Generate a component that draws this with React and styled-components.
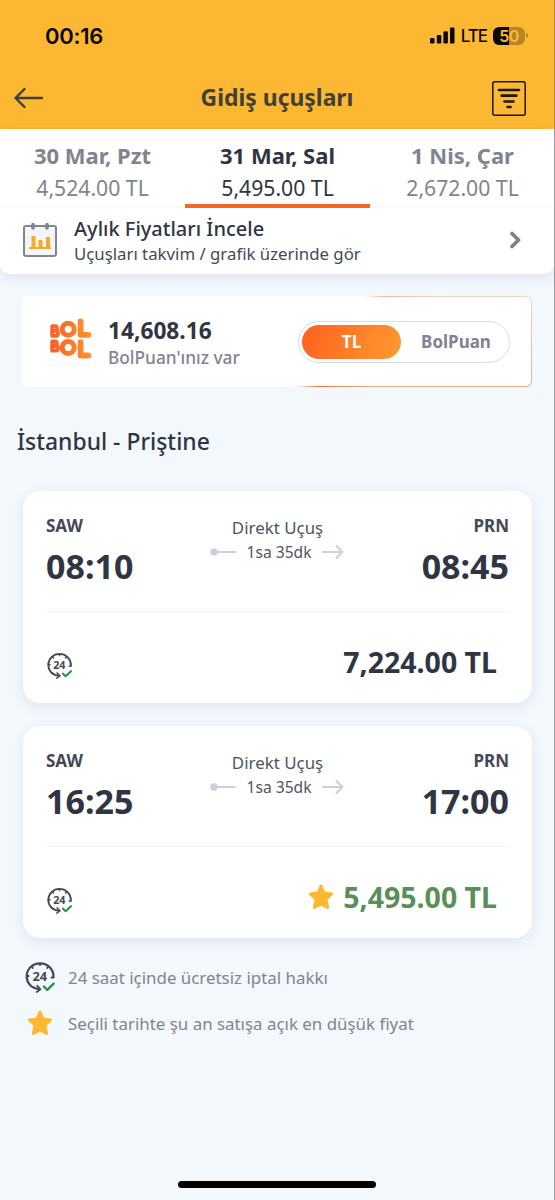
import React from "react";
import styled, { createGlobalStyle } from "styled-components";

const colors = {
  yellow: "#fdb833",
  orange: "#f26722",
  dark: "#2f3542",
  text: "#4e5461",
  gray: "#808490",
  line: "#c9d1dd",
  bg: "#f3f8fd",
  green: "#5b8f59",
};

const GlobalStyle = createGlobalStyle`
  * {
    box-sizing: border-box;
  }
  body {
    margin: 0;
    font-family: "Noto Sans", "Open Sans", sans-serif;
    color: ${colors.dark};
  }
  svg {
    display: block;
    flex-shrink: 0;
  }
`;

const Screen = styled.div`
  display: flex;
  flex-direction: column;
  width: 555px;
  height: 1200px;
  overflow: hidden;
  background: ${colors.bg};
  border-right: 1px solid;
  border-image: linear-gradient(#b98a2f 129px, #9a9da1 129px) 1;
`;

const Header = styled.header`
  height: 129px;
  flex-shrink: 0;
  background: ${colors.yellow};
`;

const StatusBar = styled.div`
  display: flex;
  align-items: center;
  justify-content: space-between;
  height: 70px;
  padding: 1px 26px 0 45px;
  color: #0b0904;
  font-family: Inter, sans-serif;
`;

const Clock = styled.span`
  font-size: 22px;
  font-weight: 600;
  line-height: 28px;
  letter-spacing: -0.3px;
`;

const StatusIcons = styled.div`
  display: flex;
  align-items: center;
  gap: 6px;
  font-size: 17px;
  font-weight: 500;
`;

const Network = styled.span`
  letter-spacing: -1px;
`;

const Battery = styled.div`
  display: flex;
  align-items: center;
  gap: 1px;
`;

const BatteryBody = styled.div`
  display: flex;
  align-items: center;
  justify-content: center;
  width: 32px;
  height: 18px;
  border-radius: 6px;
  background: linear-gradient(90deg, #0b0904 50%, #b78627 50%);
  color: ${colors.yellow};
  font-size: 16px;
  font-weight: 600;
  line-height: 18px;
  letter-spacing: -0.5px;
`;

const BatteryTip = styled.div`
  width: 2px;
  height: 5px;
  border-radius: 0 2px 2px 0;
  background: #b78627;
`;

const TitleBar = styled.div`
  display: grid;
  grid-template-columns: 34px 1fr 34px;
  align-items: center;
  height: 56px;
  padding: 0 28px 0 14px;
`;

const Title = styled.h1`
  margin: 0 0 0 14px;
  text-align: center;
  color: #403f3c;
  font-size: 22.9px;
  font-weight: 700;
  line-height: 32px;
`;

const TopPanel = styled.section`
  flex-shrink: 0;
  height: 145px;
  background: #fff;
  border-radius: 0 0 10px 10px;
  box-shadow: 0 4px 14px rgba(70, 80, 150, 0.12);
`;

const DayTabs = styled.nav`
  display: grid;
  grid-template-columns: repeat(3, 185px);
  height: 77px;
`;

const DayTab = styled.div`
  display: flex;
  flex-direction: column;
  align-items: center;
  padding-top: 10px;
  color: ${(props) => (props.$active ? colors.dark : colors.gray)};
  border-bottom: ${(props) =>
    props.$active ? `4px solid ${colors.orange}` : "1px solid #f8f8fa"};
`;

const DayName = styled.span`
  font-size: 22px;
  font-weight: 700;
  line-height: 32px;
`;

const DayPrice = styled.span`
  margin-top: 1px;
  font-size: 21.2px;
  line-height: 32px;
`;

const MonthlyRow = styled.div`
  display: flex;
  align-items: center;
  height: 68px;
  padding: 0 32px 0 22px;
`;

const MonthlyText = styled.div`
  flex: 1;
  margin: 2px 0 0 16px;
`;

const MonthlyTitle = styled.div`
  font-size: 20px;
  font-weight: 500;
  line-height: 26px;
`;

const MonthlyInfo = styled.div`
  color: #454a57;
  font-size: 16.8px;
  line-height: 24px;
`;

const PointsCard = styled.section`
  display: flex;
  align-items: center;
  flex-shrink: 0;
  height: 91px;
  margin: 22px 22px 0;
  padding: 0 21px 0 26px;
  border: 1px solid transparent;
  border-radius: 6px;
  background:
    linear-gradient(#fff, #fff) padding-box,
    linear-gradient(rgba(255, 255, 255, 0.5), rgba(255, 255, 255, 0)) border-box,
    linear-gradient(127deg, #fff 59%, #e8743b 63%, #f2a98a 72%, #f2a98a) border-box;
`;

const PointsText = styled.div`
  flex: 1;
  margin: 3px 0 0 15px;
`;

const PointsValue = styled.div`
  font-size: 22.7px;
  font-weight: 700;
  line-height: 28px;
`;

const PointsLabel = styled.div`
  color: ${colors.gray};
  font-size: 17.3px;
  font-weight: 500;
  line-height: 25px;
`;

const Toggle = styled.div`
  display: flex;
  width: 212px;
  height: 42px;
  padding: 3px;
  border: 1px solid #d6dce9;
  border-radius: 21px;
`;

const ToggleOption = styled.div`
  display: flex;
  align-items: center;
  justify-content: center;
  flex: ${(props) => (props.$active ? "0 0 99px" : "1")};
  padding-left: ${(props) => (props.$active ? "0" : "5px")};
  border-radius: 17px;
  background: ${(props) =>
    props.$active ? "linear-gradient(110deg, #ff611f, #ff9a30)" : "none"};
  color: ${(props) => (props.$active ? "#fff" : colors.gray)};
  font-size: 17px;
  font-weight: 700;
`;

const RouteTitle = styled.h2`
  margin: 39px 0 33px 17px;
  font-size: 22.9px;
  font-weight: 500;
  line-height: 32px;
`;

const FlightCard = styled.article`
  flex-shrink: 0;
  height: 212px;
  margin: 0 22px 23px 23px;
  padding: 0 23px;
  border-radius: 17px;
  background: #fff;
  box-shadow: 0 4px 14px rgba(70, 80, 150, 0.11);
`;

const FlightTop = styled.div`
  display: flex;
  justify-content: space-between;
  height: 121px;
  padding-top: 22px;
  border-bottom: 1px solid #eef1f6;
`;

const Stop = styled.div`
  text-align: ${(props) => props.$align};
`;

const Airport = styled.div`
  color: #444956;
  font-size: 17px;
  font-weight: 700;
  line-height: 26px;
`;

const Time = styled.div`
  margin-top: 4px;
  font-size: 34px;
  font-weight: 700;
  line-height: 46px;
`;

const Leg = styled.div`
  padding-top: 2px;
  text-align: center;
  color: ${colors.text};
`;

const LegType = styled.div`
  font-size: 16.9px;
  line-height: 26px;
`;

const LegDuration = styled.div`
  display: flex;
  align-items: center;
  gap: 10.5px;
  padding-right: 1px;
  font-size: 15.6px;
  line-height: 22px;
`;

const FlightBottom = styled.div`
  display: flex;
  align-items: center;
  justify-content: space-between;
  padding: 28px 12px 0 0;
`;

const CancelBadge = styled.div`
  padding-top: 6px;
`;

const Price = styled.div`
  display: flex;
  align-items: center;
  gap: 9px;
  color: ${(props) => (props.$best ? colors.green : colors.dark)};
  font-size: 28.5px;
  font-weight: 700;
  line-height: 44px;
`;

const Legend = styled.ul`
  display: flex;
  flex-direction: column;
  gap: 14px;
  margin: 0;
  padding: 0 0 0 24px;
  list-style: none;
`;

const LegendItem = styled.li`
  display: flex;
  align-items: center;
  gap: 12px;
  height: 32px;
  color: ${colors.gray};
  font-size: 16.9px;
`;

const LegendIcon = styled.span`
  display: flex;
  justify-content: center;
  width: 32px;
`;

const HomeIndicator = styled.div`
  width: 198px;
  height: 7px;
  margin: auto auto 12px;
  border-radius: 4px;
  background: #000;
`;

const SignalIcon = () => (
  <svg width="25" height="17" viewBox="0 0 25 17" fill="#0b0904">
    <rect x="0" y="11" width="4.5" height="5.5" rx="1.3" />
    <rect x="6.8" y="8" width="4.5" height="8.5" rx="1.3" />
    <rect x="13.4" y="4.3" width="4.5" height="12.2" rx="1.3" />
    <rect x="20" y="0.5" width="4.5" height="16" rx="1.3" />
  </svg>
);

const BackIcon = () => (
  <svg width="30" height="22" viewBox="0 0 30 22" fill="none" stroke="#403f3c" strokeWidth="2.4" strokeLinecap="round" strokeLinejoin="round">
    <path d="M28 11H1.5M10.5 2L1.5 11L10.5 20" />
  </svg>
);

const FilterIcon = () => (
  <svg width="34" height="35" viewBox="0 0 34 35" fill="none" stroke="#1d1609" strokeLinecap="round">
    <rect x="0.8" y="0.8" width="32.4" height="33.4" rx="2" strokeWidth="1.5" />
    <path d="M7 9H27M9.7 14.7H24.3M12.5 20.5H21.5M15.5 26H18.5" strokeWidth="2.7" />
  </svg>
);

const CalendarIcon = () => (
  <svg width="36" height="36" viewBox="0 0 36 36" fill="none">
    <rect x="2" y="4" width="32" height="30" rx="2" fill="#f3f5fa" stroke="#808592" strokeWidth="2" />
    <path d="M11 2.5V6M25 2.5V6" stroke="#808592" strokeWidth="3.6" strokeLinecap="round" />
    <path d="M7 26H29" stroke="#f7a928" strokeWidth="2" />
    <path d="M11.5 26V14M18.5 26V18M26 26V15" stroke="#f7a928" strokeWidth="4" />
  </svg>
);

const ChevronIcon = () => (
  <svg width="13" height="18" viewBox="0 0 13 18" fill="none" stroke="#7d828e" strokeWidth="3.8" strokeLinecap="round" strokeLinejoin="round">
    <path d="M3 2.5L9.5 9L3 15.5" />
  </svg>
);

const BolBolLogo = () => (
  <svg width="44" height="49" viewBox="0 0 44 49" fill="none" strokeLinecap="round" strokeLinejoin="round">
    <defs>
      <linearGradient id="logo" gradientUnits="userSpaceOnUse" x1="0" y1="20" x2="43" y2="20">
        <stop offset="0" stopColor="#fb5d22" />
        <stop offset="1" stopColor="#ff9632" />
      </linearGradient>
    </defs>
    <g stroke="url(#logo)">
      <path d="M3.2 9.2H6.5Q8 9.2 8 11.2Q8 13.8 6.5 13.8H3.2ZM3.2 13.8H7Q9 13.8 9 16.3Q9 18.8 7 18.8H3.2Z" strokeWidth="3.8" />
      <circle cx="19.2" cy="12.2" r="6" strokeWidth="5" />
      <path d="M31.6 4.5V17.8H39.5" strokeWidth="5.8" />
      <path d="M3.2 24.5H6.5Q8 24.5 8 26.5Q8 29 6.5 29H3.2ZM3.2 29H7Q9 29 9 31.3Q9 33.7 7 33.7H3.2Z" strokeWidth="3.8" />
      <circle cx="19.2" cy="30.6" r="6" strokeWidth="5" />
      <path d="M31.6 25.2V38.5H39.5" strokeWidth="5.8" />
    </g>
    <path d="M2 47.5H42" stroke="#f3f6fb" />
  </svg>
);

const Clock24Icon = ({ size }) => (
  <svg width={size} height={size} viewBox="0 0 32 32" fill="none" strokeLinecap="round" strokeLinejoin="round">
    <path d="M15 28C7.5 27.5 2.7 22 2.7 15.5C2.7 8 8.7 2.3 16 2.3C23.5 2.3 29.5 8 29.5 15.5V16.5" stroke="#444956" strokeWidth="2.2" />
    <path d="M13.3 24.8L16.5 28.3L12.8 31M16 3V4.2M8 6L8.8 7M24 6L23.2 7M3.5 15H4.7M28.8 16.5H27.5" stroke="#444956" strokeWidth="1.8" />
    <text x="15.8" y="19.6" textAnchor="middle" fill="#444956" fontSize="12.8" fontWeight="700">24</text>
    <path d="M20 25.6L23.3 28.8L29.6 22.7" stroke="#2b9348" strokeWidth="2.4" />
  </svg>
);

const StarIcon = () => (
  <svg width="26" height="26" viewBox="0 0 26 26" fill="#fdb833" stroke="#fdb833" strokeWidth="3" strokeLinejoin="round">
    <path d="M13 2.2L16 9L23.6 9.9L18 15.1L19.6 23.4L13 20L6.4 23.4L8 15.1L2.4 9.9L10 9Z" />
  </svg>
);

const LegStart = () => (
  <svg width="26" height="8" viewBox="0 0 26 8">
    <path d="M4 4H25" stroke={colors.line} strokeWidth="2" strokeLinecap="round" />
    <circle cx="4" cy="4" r="3.7" fill={colors.line} />
  </svg>
);

const LegEnd = () => (
  <svg width="22" height="14" viewBox="0 0 22 14" fill="none" stroke={colors.line} strokeWidth="2" strokeLinecap="round" strokeLinejoin="round">
    <path d="M1 7H20.5M14.5 1L20.5 7L14.5 13" />
  </svg>
);

const days = [
  { name: "30 Mar, Pzt", price: "4,524.00 TL" },
  { name: "31 Mar, Sal", price: "5,495.00 TL", active: true },
  { name: "1 Nis, Çar", price: "2,672.00 TL" },
];

const flights = [
  { departure: "08:10", arrival: "08:45", price: "7,224.00 TL" },
  { departure: "16:25", arrival: "17:00", price: "5,495.00 TL", best: true },
];

const Flight = ({ flight }) => (
  <FlightCard>
    <FlightTop>
      <Stop $align="left">
        <Airport>SAW</Airport>
        <Time>{flight.departure}</Time>
      </Stop>
      <Leg>
        <LegType>Direkt Uçuş</LegType>
        <LegDuration>
          <LegStart />
          <span>1sa 35dk</span>
          <LegEnd />
        </LegDuration>
      </Leg>
      <Stop $align="right">
        <Airport>PRN</Airport>
        <Time>{flight.arrival}</Time>
      </Stop>
    </FlightTop>
    <FlightBottom>
      <CancelBadge>
        <Clock24Icon size={27} />
      </CancelBadge>
      <Price $best={flight.best}>
        {flight.best && <StarIcon />}
        <span>{flight.price}</span>
      </Price>
    </FlightBottom>
  </FlightCard>
);

const App = () => {
  return (
    <Screen>
      <GlobalStyle />
      <Header>
        <StatusBar>
          <Clock>00:16</Clock>
          <StatusIcons>
            <SignalIcon />
            <Network>LTE</Network>
            <Battery>
              <BatteryBody>50</BatteryBody>
              <BatteryTip />
            </Battery>
          </StatusIcons>
        </StatusBar>
        <TitleBar>
          <BackIcon />
          <Title>Gidiş uçuşları</Title>
          <FilterIcon />
        </TitleBar>
      </Header>
      <TopPanel>
        <DayTabs>
          {days.map((day) => (
            <DayTab key={day.name} $active={day.active}>
              <DayName>{day.name}</DayName>
              <DayPrice>{day.price}</DayPrice>
            </DayTab>
          ))}
        </DayTabs>
        <MonthlyRow>
          <CalendarIcon />
          <MonthlyText>
            <MonthlyTitle>Aylık Fiyatları İncele</MonthlyTitle>
            <MonthlyInfo>Uçuşları takvim / grafik üzerinde gör</MonthlyInfo>
          </MonthlyText>
          <ChevronIcon />
        </MonthlyRow>
      </TopPanel>
      <PointsCard>
        <BolBolLogo />
        <PointsText>
          <PointsValue>14,608.16</PointsValue>
          <PointsLabel>BolPuan'ınız var</PointsLabel>
        </PointsText>
        <Toggle>
          <ToggleOption $active>TL</ToggleOption>
          <ToggleOption>BolPuan</ToggleOption>
        </Toggle>
      </PointsCard>
      <RouteTitle>İstanbul - Priştine</RouteTitle>
      {flights.map((flight) => (
        <Flight key={flight.departure} flight={flight} />
      ))}
      <Legend>
        <LegendItem>
          <LegendIcon>
            <Clock24Icon size={32} />
          </LegendIcon>
          24 saat içinde ücretsiz iptal hakkı
        </LegendItem>
        <LegendItem>
          <LegendIcon>
            <StarIcon />
          </LegendIcon>
          Seçili tarihte şu an satışa açık en düşük fiyat
        </LegendItem>
      </Legend>
      <HomeIndicator />
    </Screen>
  );
};

export default App;
